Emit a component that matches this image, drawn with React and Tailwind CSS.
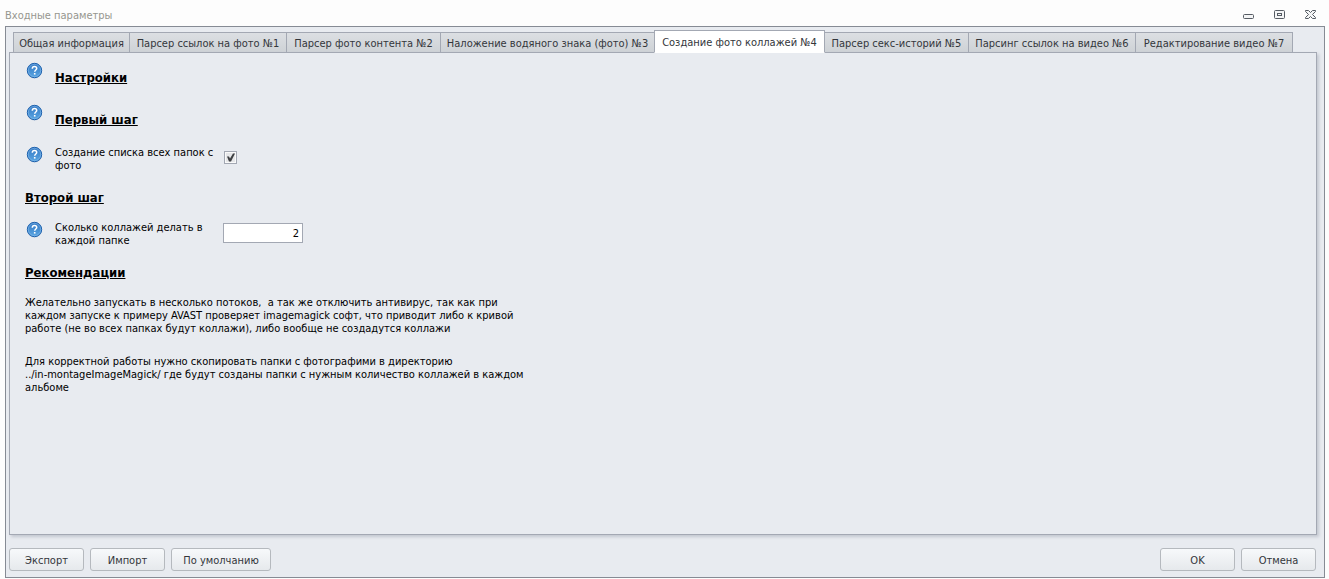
import React, { useState } from "react";

const tabs = [
  { id: 1, title: "Общая информация", width: "w-[117px]" },
  { id: 2, title: "Парсер ссылок на фото №1", width: "w-[158px]" },
  { id: 3, title: "Парсер фото контента №2", width: "w-[155px]" },
  { id: 4, title: "Наложение водяного знака (фото) №3", width: "w-[215px]" },
  { id: 5, title: "Создание фото коллажей №4", width: "w-[171px]" },
  { id: 6, title: "Парсер секс-историй №5", width: "w-[145px]" },
  { id: 7, title: "Парсинг ссылок на видео №6", width: "w-[168px]" },
  { id: 8, title: "Редактирование видео №7", width: "w-[158px]" },
];

function App() {
  const [active, setActive] = useState(5);

  return (
    <div className="flex min-h-screen flex-col bg-[#fdfdfd] pr-1 pb-px pl-[5px] font-['DejaVu_Sans_Condensed','DejaVu_Sans',sans-serif] text-[11px] leading-[13px] text-black">
      <TitleBar />

      <div className="flex flex-1 flex-col border border-[#868b94] bg-[#e8ebf0] pt-[3px] pr-[7px] pb-1.5 pl-[3px]">
        <TabStrip active={active} onSelect={setActive} />

        <main className="flex-1 border border-[#a3a8b3] px-[15px] pt-2 shadow-[2px_2px_3px_#c3c7d0]">
          <SettingsForm />
        </main>

        <footer className="mt-[13px] flex justify-between pr-px">
          <div className="flex gap-1.5">
            <DialogButton>Экспорт</DialogButton>
            <DialogButton>Импорт</DialogButton>
            <DialogButton wide>По умолчанию</DialogButton>
          </div>
          <div className="flex gap-1.5">
            <DialogButton>OK</DialogButton>
            <DialogButton>Отмена</DialogButton>
          </div>
        </footer>
      </div>
    </div>
  );
}

const TitleBar = () => (
  <header className="flex h-[26px] items-center justify-between pt-1 pr-2">
    <h1 className="text-[#96968f]">Входные параметры</h1>
    <div className="flex items-center gap-[18px] pb-px">
      <button aria-label="Свернуть">
        <svg width="13" height="12" viewBox="0 0 13 12" fill="#f4f5f6" stroke="#555b63">
          <rect x="1.5" y="5.5" width="10" height="4" rx="1" />
        </svg>
      </button>
      <button aria-label="Развернуть">
        <svg width="13" height="12" viewBox="0 0 13 12" fill="#f4f5f6" stroke="#555b63">
          <rect x="1.5" y="1.5" width="10" height="8" rx="1" />
          <rect x="4.5" y="4.5" width="4" height="2" />
        </svg>
      </button>
      <button aria-label="Закрыть">
        <svg width="13" height="12" viewBox="0 0 13 12" fill="#f4f5f6" stroke="#555b63">
          <path d="M1.5 1.500h3l2 2 2-2h3v1l-3 3 3 3v1h-3l-2-2-2 2h-3v-1l3-3-3-3z" />
        </svg>
      </button>
    </div>
  </header>
);

const TabStrip = ({ active, onSelect }) => (
  <div role="tablist" className="-mb-px flex items-end pl-1">
    {tabs.map((tab) => (
      <button
        key={tab.id}
        role="tab"
        aria-selected={tab.id === active}
        onClick={() => onSelect(tab.id)}
        className={`-mr-px shrink-0 border border-[#a3a8b3] pt-0.5 text-center whitespace-nowrap text-[#33363b] ${tab.width} ${
          tab.id === active
            ? "relative h-[23px] border-b-white bg-white"
            : "h-[21px] bg-linear-to-b from-[#dcdfe3] to-[#ced2d6]"
        }`}
      >
        {tab.title}
      </button>
    ))}
  </div>
);

const SettingsForm = () => (
  <form>
    <div className="flex h-[42px] gap-3">
      <HelpIcon />
      <Heading>Настройки</Heading>
    </div>
    <div className="flex h-[42px] gap-3">
      <HelpIcon />
      <Heading>Первый шаг</Heading>
    </div>

    <div className="flex h-9 gap-3">
      <HelpIcon />
      <label htmlFor="folders" className="w-[157px] pt-px whitespace-nowrap">
        Создание списка всех папок с
        <br />
        фото
      </label>
      <span className="mt-1.5 grid h-[13px] w-[13px]">
        <input
          id="folders"
          type="checkbox"
          defaultChecked
          className="peer col-start-1 row-start-1 h-[13px] w-[13px] appearance-none border border-[#a3a8b3] bg-[#e6e7e9] shadow-[inset_0_0_0_1px_#fafafa]"
        />
        <svg
          viewBox="0 0 13 13"
          className="pointer-events-none invisible col-start-1 row-start-1 h-[13px] w-[13px] peer-checked:visible"
        >
          <path d="M3 5.500h2l1 2L9 2.500h2L7 10.500H5z" fill="#3d3f42" />
        </svg>
      </span>
    </div>

    <div className="h-[39px]">
      <Heading>Второй шаг</Heading>
    </div>

    <div className="flex h-9 gap-3">
      <HelpIcon />
      <label htmlFor="collages" className="w-[156px] pt-px whitespace-nowrap">
        Сколько коллажей делать в
        <br />
        каждой папке
      </label>
      <input
        id="collages"
        type="text"
        defaultValue="2"
        className="mt-[3px] h-5 w-20 border border-[#a3a8b3] bg-white px-[3px] text-right"
      />
    </div>

    <div className="h-10">
      <Heading>Рекомендации</Heading>
    </div>

    <p className="pb-5">
      Желательно запускать в несколько потоков,&nbsp; а так же отключить антивирус, так как при
      <br />
      каждом запуске к примеру AVAST проверяет imagemagick софт, что приводит либо к кривой
      <br />
      работе (не во всех папках будут коллажи), либо вообще не создадутся коллажи
    </p>
    <p>
      Для корректной работы нужно скопировать папки с фотографими в директорию
      <br />
      ../in-montageImageMagick/ где будут созданы папки с нужным количество коллажей в каждом
      <br />
      альбоме
    </p>
  </form>
);

const Heading = ({ children }) => (
  <h2 className="pt-[9px] text-[13px] leading-4 font-bold underline">{children}</h2>
);

const HelpIcon = () => (
  <svg width="18" height="18" viewBox="0 0 18 18" className="shrink-0">
    <defs>
      <linearGradient id="help" x1="0" y1="0" x2="0" y2="1">
        <stop offset="0" stopColor="#3478c4" />
        <stop offset="1" stopColor="#5aa6e2" />
      </linearGradient>
    </defs>
    <circle cx="9.500" cy="10" r="7.500" fill="#b9c6d6" />
    <circle cx="9.500" cy="9.500" r="7.200" fill="url(#help)" stroke="#1f62ae" />
    <circle cx="9.500" cy="9.500" r="6.200" fill="none" stroke="#8fc3ee" strokeWidth="0.500" />
    <path
      d="M7.300 7.700c0-1.500 1-2.200 2.200-2.200s2.200.8 2.200 2c0 1.500-2 1.600-2 3.300"
      fill="none"
      stroke="#fff"
      strokeWidth="1.500"
    />
    <rect x="8.900" y="12" width="1.600" height="1.600" fill="#fff" />
  </svg>
);

const DialogButton = ({ children, wide }) => (
  <button
    type="button"
    className={`h-[23px] rounded-[3px] border border-[#b5b9be] bg-linear-to-b from-[#f7f9fb] to-[#e6e9ec] pt-0.5 text-[#33363b] ${
      wide ? "w-[100px]" : "w-[75px]"
    }`}
  >
    {children}
  </button>
);

export default App;
